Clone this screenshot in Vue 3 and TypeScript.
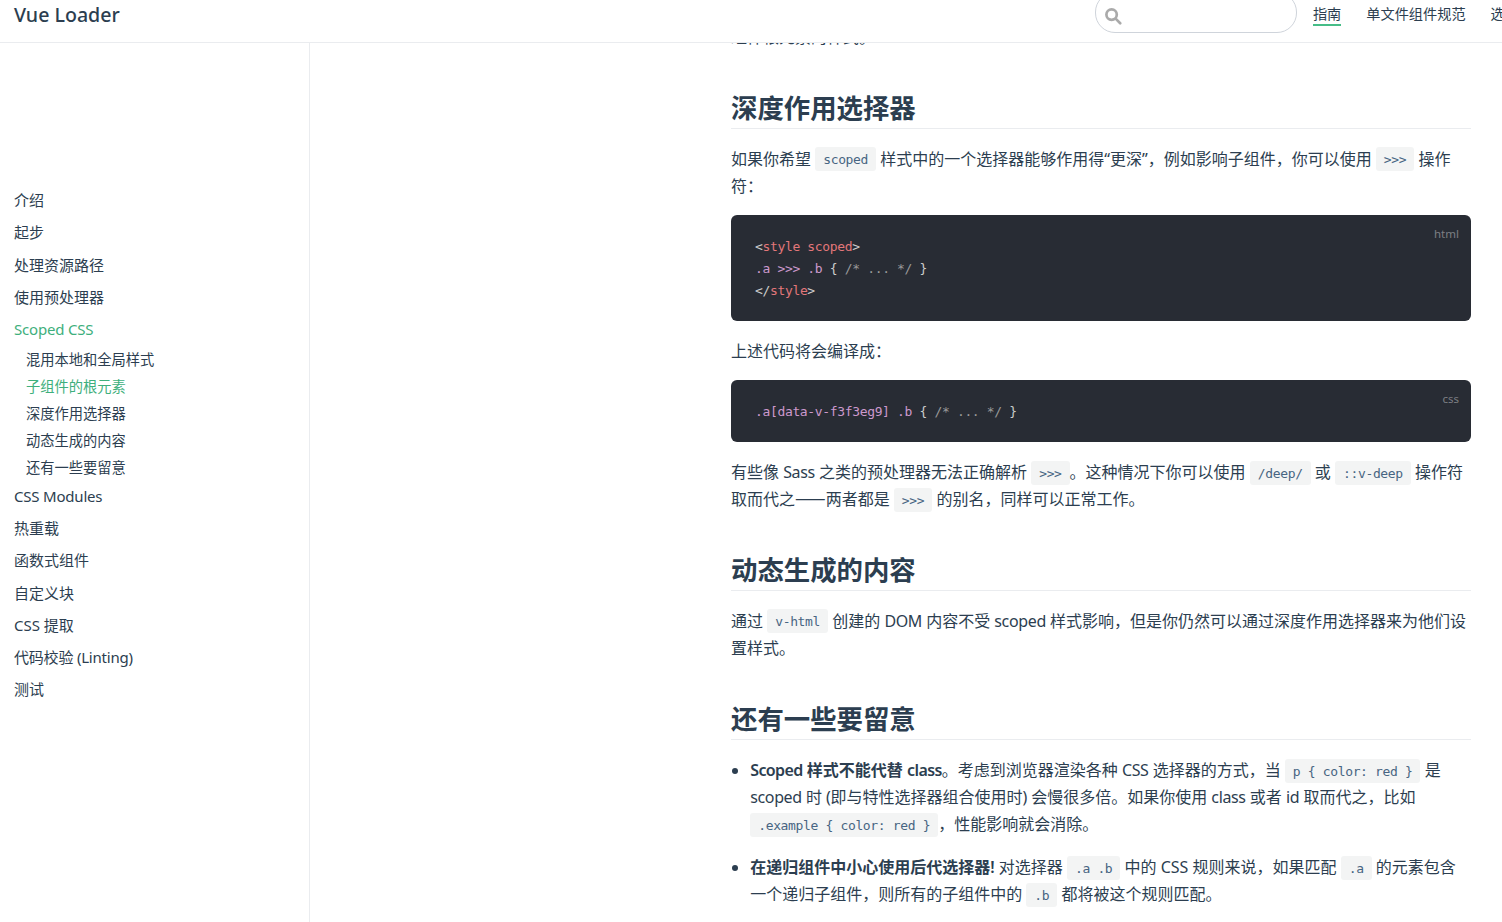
<script setup lang="ts">
interface SideItem {
  label: string
  active?: boolean
  latin?: boolean
  children?: { label: string; active?: boolean }[]
}

const sidebar: SideItem[] = [
  { label: '介绍' },
  { label: '起步' },
  { label: '处理资源路径' },
  { label: '使用预处理器' },
  {
    label: 'Scoped CSS',
    active: true,
    latin: true,
    children: [
      { label: '混用本地和全局样式' },
      { label: '子组件的根元素', active: true },
      { label: '深度作用选择器' },
      { label: '动态生成的内容' },
      { label: '还有一些要留意' },
    ],
  },
  { label: 'CSS Modules', latin: true },
  { label: '热重载' },
  { label: '函数式组件' },
  { label: '自定义块' },
  { label: 'CSS 提取' },
  { label: '代码校验 (Linting)', latin: true },
  { label: '测试' },
]

const navLinks = ['指南', '单文件组件规范', '选项']
</script>

<template>
  <div class="page">
    <header class="navbar">
      <span class="site-name">Vue Loader</span>
      <div class="nav-right">
        <div class="search">
          <svg width="18" height="18" viewBox="0 0 18 18" fill="none" stroke="#aaa" stroke-width="2.7">
            <circle cx="7.6" cy="7.6" r="5.2" />
            <path d="M11.6 11.6l4.6 4.6" stroke-linecap="round" />
          </svg>
        </div>
        <nav class="nav-links">
          <a v-for="(link, i) in navLinks" :key="link" class="nav-link" :class="{ current: i === 0 }">{{ link }}</a>
        </nav>
      </div>
    </header>

    <div class="body-row">
      <aside class="sidebar">
        <ul class="side-list">
          <li v-for="item in sidebar" :key="item.label">
            <a class="side-link" :class="{ active: item.active, 'lat-side': item.latin }">{{ item.label }}</a>
            <ul v-if="item.children" class="sub-list">
              <li v-for="sub in item.children" :key="sub.label">
                <a class="sub-link" :class="{ active: sub.active }">{{ sub.label }}</a>
              </li>
            </ul>
          </li>
        </ul>
      </aside>

      <main class="content">
        <p class="clipped">组件根元素的样式。</p>

        <h2>深度作用选择器</h2>
        <p>如果你希望 <code>scoped</code> 样式中的一个选择器能够作用得“更深”，例如影响子组件，你可以使用 <code>&gt;&gt;&gt;</code> 操作符：</p>
        <div class="code-block">
          <span class="lang">html</span>
          <pre><span class="punc">&lt;</span><span class="tag">style scoped</span><span class="punc">&gt;</span>
<span class="sel">.a &gt;&gt;&gt; .b</span> <span class="punc">{</span> <span class="com">/* ... */</span> <span class="punc">}</span>
<span class="punc">&lt;/</span><span class="tag">style</span><span class="punc">&gt;</span></pre>
        </div>
        <p>上述代码将会编译成：</p>
        <div class="code-block">
          <span class="lang">css</span>
          <pre><span class="sel">.a[data-v-f3f3eg9] .b</span> <span class="punc">{</span> <span class="com">/* ... */</span> <span class="punc">}</span></pre>
        </div>
        <p>有些像 <span class="lat">Sass</span> 之类的预处理器无法正确解析 <code>&gt;&gt;&gt;</code>。这种情况下你可以使用 <code>/deep/</code> 或 <code>::v-deep</code> 操作符取而代之<span class="dash">——</span>两者都是 <code>&gt;&gt;&gt;</code> 的别名，同样可以正常工作。</p>

        <h2>动态生成的内容</h2>
        <p>通过 <code>v-html</code> 创建的 <span class="lat">DOM</span> 内容不受 <span class="lat">scoped</span> 样式影响，但是你仍然可以通过深度作用选择器来为他们设置样式。</p>

        <h2>还有一些要留意</h2>
        <ul class="notes">
          <li><strong><span class="lat-bold">Scoped</span> 样式不能代替 <span class="lat-bold">class</span></strong>。考虑到浏览器渲染各种 <span class="lat">CSS</span> 选择器的方式，当 <code>p { color: red }</code> 是 <span class="lat">scoped</span> 时 <span class="lat">(</span>即与特性选择器组合使用时<span class="lat">)</span> 会慢很多倍。如果你使用 <span class="lat">class</span> 或者 <span class="lat">id</span> 取而代之，比如 <code>.example { color: red }</code>，性能影响就会消除。</li>
          <li><strong>在递归组件中小心使用后代选择器!</strong> 对选择器 <code>.a .b</code> 中的 CSS 规则来说，如果匹配 <code>.a</code> 的元素包含一个递归子组件，则所有的子组件中的 <code>.b</code> 都将被这个规则匹配。</li>
        </ul>
      </main>
    </div>
  </div>
</template>

<style>
html,
body {
  margin: 0;
  height: 100%;
  overflow: hidden;
  background: #fff;
}
</style>

<style scoped>
.page {
  height: 922px;
  width: 1502px;
  overflow: hidden;
  display: flex;
  flex-direction: column;
  color: #2c3e50;
  font-family: 'Noto Sans', 'Noto Sans CJK SC', sans-serif;
  font-size: 16px;
}

.navbar {
  flex: none;
  height: 42px;
  border-bottom: 1px solid #eaecef;
  display: flex;
  align-items: flex-start;
  justify-content: space-between;
  padding-left: 14px;
  overflow: hidden;
}

.site-name {
  font-size: 19.6px;
  font-weight: 500;
  line-height: 30px;
  white-space: nowrap;
}

.nav-right {
  display: flex;
  align-items: flex-start;
  flex: none;
  margin-right: -17px;
}

.search {
  width: 192px;
  height: 39px;
  margin-top: -8px;
  border: 1px solid #cfd4db;
  border-radius: 20px;
  display: flex;
  align-items: center;
  padding-left: 8px;
}

.search svg {
  margin-top: 6px;
}

.nav-links {
  display: flex;
  gap: 25px;
  margin-left: 16px;
  white-space: nowrap;
}

.nav-link {
  font-size: 14.2px;
  line-height: 24px;
  padding-top: 2px;
  height: 24px;
}

.nav-link.current {
  border-bottom: 2px solid #46bd87;
  height: 22px;
}

.body-row {
  flex: 1;
  min-height: 0;
  display: flex;
  overflow: hidden;
}

.sidebar {
  flex: none;
  width: 295px;
  border-right: 1px solid #eaecef;
  padding: 141.2px 0 0 14px;
}

.side-list,
.sub-list {
  list-style: none;
  margin: 0;
  padding: 0;
}

.side-link {
  display: block;
  font-size: 15px;
  line-height: 32.2px;
}

.lat-side {
  letter-spacing: -0.2px;
}

.sub-list {
  margin-top: 0.6px;
  margin-bottom: -0.8px;
  padding-left: 12px;
}

.sub-link {
  display: block;
  font-size: 14.25px;
  line-height: 27px;
}

.active {
  color: #3eaf7c;
}

.content {
  flex: none;
  width: 740px;
  margin-left: 421px;
  line-height: 27.2px;
}

p {
  margin: 17px 0 15px;
}

.clipped {
  margin-top: -18.9px;
}

.lat {
  letter-spacing: -0.36px;
}

.lat-bold {
  letter-spacing: -0.6px;
}

.dash {
  font-family: 'Noto Sans CJK SC', sans-serif;
  font-size: 18.3px;
  line-height: 1;
}

h2 {
  font-size: 26.4px;
  font-weight: 700;
  line-height: 33px;
  margin: 40.3px 0 17px;
  padding-bottom: 3px;
  border-bottom: 1px solid #eaecef;
}

code {
  font-family: 'DejaVu Sans Mono', monospace;
  font-size: 13px;
  letter-spacing: -0.35px;
  line-height: 1;
  vertical-align: 1px;
  color: #476582;
  background: rgba(27, 31, 35, 0.05);
  padding: 4.5px 8px;
  border-radius: 3px;
}

.code-block {
  position: relative;
  background: #282c34;
  border-radius: 6px;
  margin: 15px 0;
  padding: 21px 24px 19px;
}

.code-block pre {
  margin: 0;
  font-family: 'DejaVu Sans Mono', monospace;
  font-size: 13px;
  letter-spacing: -0.35px;
  line-height: 22px;
  color: #fff;
}

.lang {
  position: absolute;
  top: 8.5px;
  right: 12px;
  font-size: 11.5px;
  line-height: 20px;
  color: rgba(255, 255, 255, 0.4);
}

.punc {
  color: #ccc;
}

.tag {
  color: #e2777a;
}

.sel {
  color: #cc99cd;
}

.com {
  color: #999;
}

.notes {
  margin: 17.4px 0 0;
  padding-left: 19.2px;
}

.notes li + li {
  margin-top: 15.4px;
}

strong {
  font-weight: 600;
}
</style>
